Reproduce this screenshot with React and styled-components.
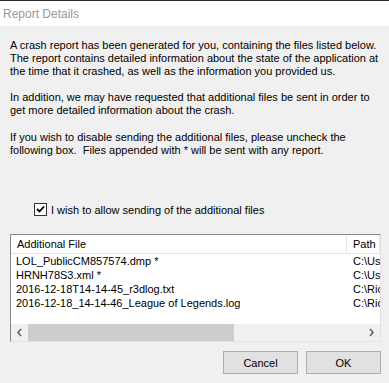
import styled, { createGlobalStyle } from "styled-components";

const Global = createGlobalStyle`
  body {
    margin: 0;
    background: #f0f0f0;
  }
`;

const Win = styled.div`
  width: 389px;
  height: 383px;
  overflow: hidden;
  background: #f0f0f0;
  font-family: "Liberation Sans", Arial, sans-serif;
  font-size: 11px;
  color: #000;
`;

const TitleBar = styled.div`
  height: 25px;
  border-top: 1px solid #2b2b2b;
  background: #fff;
  display: flex;
  align-items: center;
  padding-left: 3px;
  color: #999;
  font-size: 12px;
`;

const Body = styled.div`
  padding: 13px 8px 0 10px;
  display: flex;
  flex-direction: column;
`;

const Para = styled.p`
  margin: ${(p) => p.gap || 0}px 0 0 0;
  line-height: 13px;
  white-space: pre-wrap;
`;

const CheckRow = styled.label`
  margin: 46px 0 0 24px;
  display: flex;
  align-items: center;
  gap: 4px;
  height: 13px;
`;

const Box = styled.span`
  width: 11px;
  height: 11px;
  border: 1px solid #333;
  background: #fff;
  display: flex;
  align-items: center;
  justify-content: center;
`;

const ListBox = styled.div`
  margin-top: 18px;
  height: 106px;
  border: 1px solid #828790;
  border-right-color: #e3e3e3;
  border-bottom-color: #e3e3e3;
  background: #fff;
  display: flex;
  flex-direction: column;
  overflow: hidden;
`;

const Cols = styled.div`
  display: grid;
  grid-template-columns: 336px 1fr;
  height: ${(p) => p.h}px;
  align-items: center;
  white-space: nowrap;
  overflow: hidden;
`;

const Header = styled(Cols)`
  border-bottom: 1px solid #e5e5e5;
  & > span {
    padding-left: 6px;
    border-right: 1px solid #e5e5e5;
    height: 100%;
    display: flex;
    align-items: center;
  }
`;

const Cell = styled.span`
  padding-left: ${(p) => p.pad}px;
  overflow: hidden;
`;

const Rows = styled.div`
  flex: 1;
  padding-top: 0;
`;

const HScroll = styled.div`
  height: 17px;
  background: #f0f0f0;
  display: flex;
  align-items: stretch;
`;

const Arrow = styled.div`
  width: 17px;
  display: flex;
  align-items: center;
  justify-content: center;
`;

const Track = styled.div`
  flex: 1;
  display: flex;
`;

const Thumb = styled.div`
  width: ${(p) => p.w}px;
  background: #cdcdcd;
`;

const Buttons = styled.div`
  margin-top: 9px;
  display: flex;
  justify-content: flex-end;
  gap: 8px;
`;

const Button = styled.button`
  width: 75px;
  height: 23px;
  background: #e1e1e1;
  border: 1px solid #adadad;
  font-family: inherit;
  font-size: 11px;
  color: #000;
  padding: 0;
`;

const files = [
  ["LOL_PublicCM857574.dmp *", "C:\\Users"],
  ["HRNH78S3.xml *", "C:\\Users"],
  ["2016-12-18T14-14-45_r3dlog.txt", "C:\\Riot"],
  ["2016-12-18_14-14-46_League of Legends.log", "C:\\Riot"],
];

function Chevron({ dir }) {
  const d = dir === "left" ? "M5 1 L2 4.5 L5 8" : "M2 1 L5 4.5 L2 8";
  return (
    <svg width="7" height="9" viewBox="0 0 7 9">
      <path d={d} fill="none" stroke="#606060" strokeWidth="1.6" />
    </svg>
  );
}

export default function App() {
  return (
    <Win>
      <Global />
      <TitleBar>Report Details</TitleBar>
      <Body>
        <Para>
          A crash report has been generated for you, containing the files listed below.
          The report contains detailed information about the state of the application at
          the time that it crashed, as well as the information you provided us.
        </Para>
        <Para gap={13}>
          In addition, we may have requested that additional files be sent in order to
          get more detailed information about the crash.
        </Para>
        <Para gap={14}>
          {"If you wish to disable sending the additional files, please uncheck the\nfollowing box.  Files appended with * will be sent with any report."}
        </Para>
        <CheckRow>
          <Box>
            <svg width="9" height="9" viewBox="0 0 9 9">
              <path d="M1 4 L3.5 6.5 L8 1.5" fill="none" stroke="#000" strokeWidth="1.8" />
            </svg>
          </Box>
          I wish to allow sending of the additional files
        </CheckRow>
        <ListBox>
          <Header h={18}>
            <span>Additional File</span>
            <span>Path</span>
          </Header>
          <Rows>
            {files.map(([name, path]) => (
              <Cols h={14} key={name}>
                <Cell pad={5}>{name}</Cell>
                <Cell pad={6}>{path}</Cell>
              </Cols>
            ))}
          </Rows>
          <HScroll>
            <Arrow>
              <Chevron dir="left" />
            </Arrow>
            <Track>
              <Thumb w={206} />
            </Track>
            <Arrow>
              <Chevron dir="right" />
            </Arrow>
          </HScroll>
        </ListBox>
        <Buttons>
          <Button>Cancel</Button>
          <Button>OK</Button>
        </Buttons>
      </Body>
    </Win>
  );
}
